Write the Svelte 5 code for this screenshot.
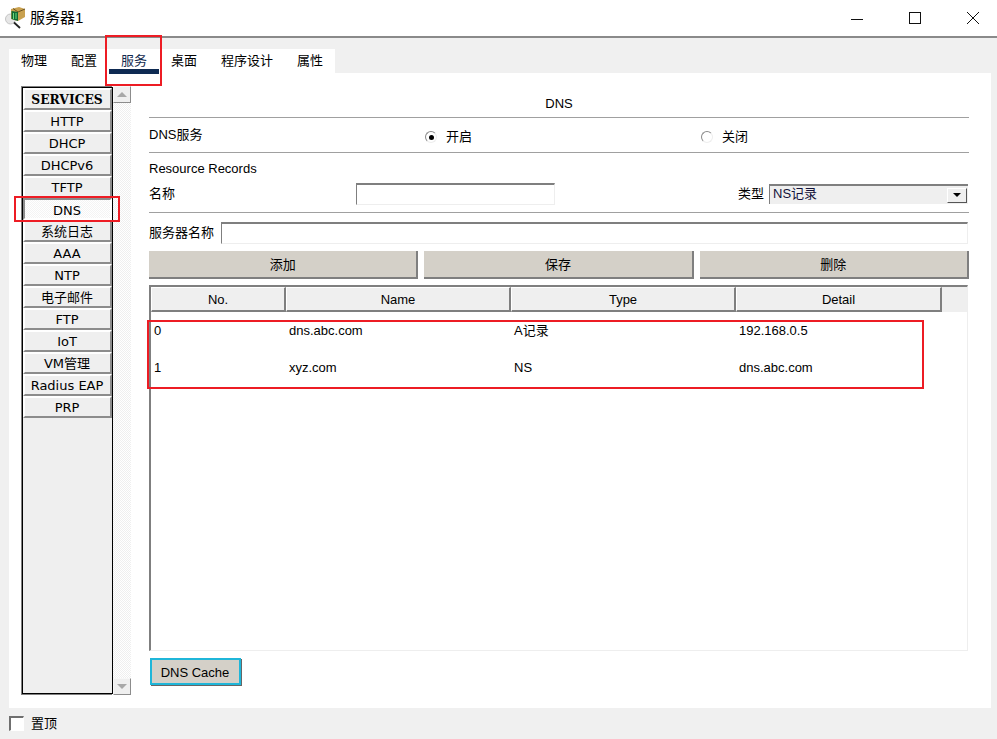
<script lang="ts">
	const tabs = ['物理', '配置', '服务', '桌面', '程序设计', '属性'];
	const services = ['HTTP', 'DHCP', 'DHCPv6', 'TFTP', 'DNS', '系统日志', 'AAA', 'NTP', '电子邮件', 'FTP', 'IoT', 'VM管理', 'Radius EAP', 'PRP'];
	const columns = ['No.', 'Name', 'Type', 'Detail'];
	const records = [
		['0', 'dns.abc.com', 'A记录', '192.168.0.5'],
		['1', 'xyz.com', 'NS', 'dns.abc.com']
	];
</script>

<div class="window">
	<header class="titlebar">
		<svg class="app-icon" width="22" height="22" viewBox="0 0 22 22" aria-hidden="true">
			<circle cx="5.5" cy="12" r="5" fill="#e6e6e6" stroke="#c4c4c4" />
			<path d="M9 15.5l6 5.5" stroke="#222" stroke-width="1.8" />
			<path d="M6 2l8-2 6 2v8l-7 4-7-2z" fill="#c9a14f" />
			<path d="M13 5l7-3M13 5L8 1.5" stroke="#6b5220" stroke-width="1" />
			<path d="M6.500 4l6.500 1v9l-6.500-2z" fill="#0f6a34" />
			<path d="M8.500 6v6M11 6v6" stroke="#6fdc7c" stroke-width="1" />
		</svg>
		<span class="title">服务器1</span>
		<div class="controls">
			<svg width="14" height="14" viewBox="0 0 14 14" aria-hidden="true"><path d="M1 8.5h12" stroke="#111" /></svg>
			<svg width="14" height="14" viewBox="0 0 14 14" aria-hidden="true"><rect x="1.5" y="1.5" width="11" height="11" fill="none" stroke="#111" /></svg>
			<svg width="14" height="14" viewBox="0 0 14 14" aria-hidden="true"><path d="M1 1l12 12M13 1L1 13" stroke="#111" /></svg>
		</div>
	</header>

	<nav class="tabs">
		{#each tabs as tab, i}
			<button type="button" class="tab" class:active={i === 2}>{tab}</button>
		{/each}
	</nav>

	<section class="panel">
		<aside class="sidebar">
			<div class="list">
				<div class="list-head">SERVICES</div>
				{#each services as service}
					<button type="button" class="service" class:selected={service === 'DNS'}>{service}</button>
				{/each}
			</div>
			<div class="scrollbar">
				<span class="arrow up"></span>
				<span class="arrow down"></span>
			</div>
		</aside>

		<main class="content">
			<div class="heading">DNS</div>
			<div class="row dns-row">
				<span class="dns-label">DNS服务</span>
				<label class="radio on-radio"><span class="dot checked"></span>开启</label>
				<label class="radio off-radio"><span class="dot"></span>关闭</label>
			</div>
			<div class="records-block">
				<div class="records-title">Resource Records</div>
				<div class="name-row">
					<span class="name-label">名称</span>
					<input class="field name-input" type="text" aria-label="名称" />
					<span class="type-label">类型</span>
					<div class="select">
						<span class="select-value">NS记录</span>
						<span class="select-btn"><i></i></span>
					</div>
				</div>
			</div>
			<div class="server-row">
				<span>服务器名称</span>
				<input class="field server-input" type="text" aria-label="服务器名称" />
			</div>
			<div class="actions">
				<button type="button" class="action">添加</button>
				<button type="button" class="action">保存</button>
				<button type="button" class="action">删除</button>
			</div>
			<div class="table">
				<div class="thead">
					{#each columns as column}
						<div class="th">{column}</div>
					{/each}
				</div>
				{#each records as record}
					<div class="tr">
						{#each record as cell}
							<div class="td">{cell}</div>
						{/each}
					</div>
				{/each}
			</div>
			<button type="button" class="cache">DNS Cache</button>
		</main>
	</section>

	<footer class="footer">
		<span class="checkbox"></span>
		<span>置顶</span>
	</footer>

	<!-- red annotation boxes drawn over the screenshot -->
	<div class="mark mark-tab"></div>
	<div class="mark mark-dns"></div>
	<div class="mark mark-rows"></div>
</div>

<style>
	:global(body) {
		margin: 0;
		background: #f0f0f0;
	}

	.window {
		position: relative;
		width: 997px;
		height: 739px;
		overflow: hidden;
		background: #f0f0f0;
		color: #000;
		font-family: 'Liberation Sans', 'Noto Sans CJK SC', sans-serif;
		font-size: 13px;
		line-height: 16px;
	}

	.titlebar {
		display: flex;
		align-items: center;
		height: 36px;
		padding-left: 5px;
		background: #fff;
		border-bottom: 2px solid #8a8a8a;
		box-sizing: content-box;
	}

	.title {
		margin-left: 3px;
		font-size: 15px;
	}

	.controls {
		display: flex;
		gap: 44px;
		margin-left: auto;
		padding-right: 17px;
	}

	.tabs {
		display: flex;
		width: 326px;
		height: 24px;
		margin: 11px 0 0 9px;
		background: #fff;
	}

	.tab {
		flex: none;
		padding: 0 12px;
		border: 0;
		background: none;
		font: inherit;
		white-space: nowrap;
		color: #000;
	}

	.tab.active {
		box-shadow: inset 0 -5px 0 #0e2a52;
		position: relative;
		height: 25px;
		padding-bottom: 1px;
		color: #12294d;
	}

	.panel {
		display: flex;
		height: 635px;
		margin: 0 6px 0 9px;
		padding: 13px 22px 13px 12px;
		box-sizing: border-box;
		background: #fff;
	}

	.sidebar {
		display: flex;
		width: 110px;
		height: 609px;
		flex: none;
	}

	.list {
		width: 91px;
		margin: 1px 0 1px 1px;
		box-sizing: border-box;
		border: 1px solid #000;
		box-shadow: -1px -1px 0 #808080, -1px 1px 0 #808080;
		background: #efefef;
		font-family: 'DejaVu Sans', 'Noto Sans CJK SC', sans-serif;
		font-size: 13px;
	}

	.list-head,
	.service {
		display: block;
		width: 89px;
		height: 22px;
		padding: 1px 1px 0 0;
		box-sizing: border-box;
		border: 2px solid;
		border-color: #fff #8c8c8c #8c8c8c #fff;
		background: #efefef;
		text-align: center;
		font: inherit;
		color: #000;
	}

	.list-head {
		padding-top: 1px;
		font-family: 'DejaVu Serif', serif;
		font-weight: 700;
		font-size: 12.3px;
		line-height: 17px;
	}

	.service.selected {
		padding-top: 3px;
		border-color: #8c8c8c #fff #fff #8c8c8c;
		background: repeating-conic-gradient(#f4f4f4 0 25%, #fff 0 50%) 0 0 / 2px 2px;
	}

	.scrollbar {
		display: flex;
		flex-direction: column;
		justify-content: space-between;
		width: 18px;
		background: repeating-conic-gradient(#efefef 0 25%, #fff 0 50%) 0 0 / 2px 2px;
	}

	.arrow {
		position: relative;
		height: 17px;
		box-sizing: border-box;
		border: 1px solid;
		border-color: #f7f7f7 #8c8c8c #8c8c8c #f7f7f7;
		background: #efefef;
	}

	.arrow::after {
		content: '';
		position: absolute;
		left: 3px;
		top: 5px;
		border: 5px solid transparent;
		border-top-width: 0;
		border-bottom-color: #a8a8a8;
	}

	.arrow.down::after {
		border-top: 5px solid #a8a8a8;
		border-bottom-width: 0;
	}

	.content {
		flex: 1;
		min-width: 0;
		margin-left: 18px;
	}

	.heading {
		height: 32px;
		box-sizing: border-box;
		padding-top: 10px;
		text-align: center;
		border-bottom: 1px solid #a0a0a0;
	}

	.row {
		display: flex;
		position: relative;
	}

	.dns-row {
		height: 35px;
		box-sizing: border-box;
		align-items: center;
		border-bottom: 1px solid #a0a0a0;
	}

	.dns-label {
		width: 276px;
	}

	.radio {
		display: flex;
		align-items: center;
		gap: 9px;
		margin-top: 4px;
	}

	.on-radio {
		width: 276px;
	}

	.dot {
		position: relative;
		width: 12px;
		height: 12px;
		box-sizing: border-box;
		border: 1px solid;
		border-color: #8a8a8a #eee #eee #8a8a8a;
		border-radius: 50%;
		background: #fff;
	}

	.dot.checked::after {
		content: '';
		position: absolute;
		left: 2.5px;
		top: 2.5px;
		width: 5px;
		height: 5px;
		border-radius: 50%;
		background: #000;
	}

	.records-block {
		height: 60px;
		box-sizing: border-box;
		padding-top: 8px;
		border-bottom: 1px solid #a0a0a0;
	}

	.name-row {
		display: flex;
		align-items: center;
		height: 22px;
		margin-top: 6px;
	}

	.name-label {
		width: 207px;
	}

	.field {
		display: block;
		box-sizing: border-box;
		height: 22px;
		padding: 0;
		border: 1px solid;
		border-color: #7f7f7f #eee #eee #7f7f7f;
		border-top-width: 2px;
		background: #fff;
	}

	.name-input {
		width: 199px;
	}

	.type-label {
		margin-left: auto;
		margin-right: 5px;
	}

	.select {
		display: flex;
		align-items: center;
		justify-content: space-between;
		width: 199px;
		height: 20px;
		margin-right: 1px;
		box-sizing: border-box;
		padding: 0 1px 0 3px;
		border-top: 2px solid #7f7f7f;
		border-left: 1px solid #7f7f7f;
		background: #efefef;
		color: #12123a;
	}

	.select-value {
		margin-top: -3px;
	}

	.select-btn {
		display: flex;
		align-items: center;
		justify-content: center;
		width: 20px;
		height: 15px;
		box-sizing: border-box;
		border: 1px solid;
		border-color: #fff #555 #555 #fff;
	}

	.select-btn i {
		border: 4px solid transparent;
		border-top: 4px solid #000;
		border-bottom-width: 0;
	}

	.server-row {
		display: flex;
		align-items: center;
		gap: 7px;
		height: 22px;
		margin-top: 9px;
	}

	.server-input {
		flex: 1;
		min-width: 0;
		margin-right: 1px;
	}

	.actions {
		display: flex;
		gap: 6px;
		margin-top: 7px;
	}

	.action {
		flex: 1;
		height: 28px;
		padding: 2px 0 0;
		border: 0;
		border-right: 2px solid #7f7f7f;
		border-bottom: 2px solid #7f7f7f;
		background: #d4d0c8;
		font: inherit;
		color: #000;
	}

	.table {
		height: 366px;
		margin: 6px 1px 0 0;
		box-sizing: border-box;
		border: 1px solid #eee;
		border-top: 2px solid #7f7f7f;
		border-left: 2px solid #7f7f7f;
	}

	.thead {
		display: grid;
		grid-template-columns: 135px 225px 225px 206px;
		height: 25px;
		background: #efefef;
	}

	.th {
		display: flex;
		align-items: center;
		justify-content: center;
		padding-top: 1px;
		box-sizing: border-box;
		border: 1px solid;
		border-color: #fff #7f7f7f #7f7f7f #fff;
		border-right-width: 2px;
		border-bottom-width: 2px;
	}

	.tr {
		display: grid;
		grid-template-columns: 135px 225px 225px 206px;
		height: 37px;
		align-items: center;
	}

	.td {
		padding-left: 3px;
	}

	.cache {
		display: block;
		width: 91px;
		height: 27px;
		margin: 7px 0 0 1px;
		padding: 2px 1px 0 0;
		box-sizing: border-box;
		border: 2px solid #1fb6d9;
		box-shadow: 1px 1px 0 #666;
		background: #d4d0c8;
		font: inherit;
		color: #000;
	}

	.footer {
		display: flex;
		align-items: center;
		gap: 7px;
		height: 31px;
		padding-left: 9px;
	}

	.checkbox {
		width: 15px;
		height: 15px;
		box-sizing: border-box;
		border: 1px solid;
		border-color: #6f6f6f #fff #fff #6f6f6f;
		border-top-width: 2px;
		border-left-width: 2px;
		background: #fff;
	}

	.mark {
		position: absolute;
		box-sizing: border-box;
		border: 2px solid #ed1c24;
		pointer-events: none;
	}

	.mark-tab {
		left: 105px;
		top: 35px;
		width: 57px;
		height: 51px;
	}

	.mark-dns {
		left: 14px;
		top: 196px;
		width: 106px;
		height: 26px;
	}

	.mark-rows {
		left: 147px;
		top: 320px;
		width: 777px;
		height: 69px;
	}
</style>
